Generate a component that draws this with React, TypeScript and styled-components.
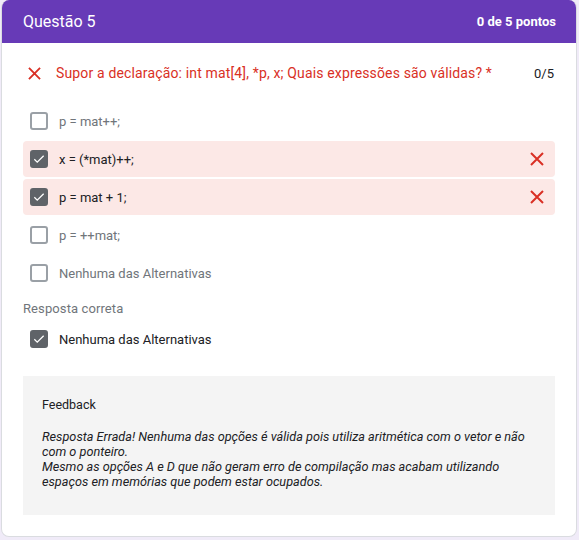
import React from "react";
import styled, { createGlobalStyle } from "styled-components";

const GlobalStyle = createGlobalStyle`
  html, body {
    margin: 0;
    padding: 0;
    background: #f0ebf8;
  }
  body {
    font-family: Roboto, "Liberation Sans", Arial, sans-serif;
  }
`;

// --- Card ---
const Card = styled.div`
  width: 576px;
  height: 537px;
  margin-left: 1px;
  box-sizing: border-box;
  background: #ffffff;
  border: 1px solid #dadce0;
  border-top: none;
  border-radius: 8px;
  overflow: hidden;
  display: flex;
  flex-direction: column;
`;

const Header = styled.div`
  height: 43px;
  background: #673ab7;
  color: #ffffff;
  display: flex;
  align-items: center;
  justify-content: space-between;
  padding: 0 20px 0 21px;
`;

const HeaderTitle = styled.span`
  font-size: 16px;
  font-weight: 400;
`;

const HeaderScore = styled.span`
  font-size: 13px;
  font-weight: 700;
`;

const Body = styled.div`
  padding: 0 21px;
  display: flex;
  flex-direction: column;
`;

const QuestionRow = styled.div`
  height: 60px;
  display: flex;
  align-items: center;
  padding: 0 1px 0 5px;
`;

const QuestionText = styled.span`
  flex: 1;
  margin-left: 15px;
  font-size: 14px;
  letter-spacing: 0.15px;
  color: #d93025;
`;

const QuestionScore = styled.span`
  font-size: 13px;
  color: #202124;
`;

const OptionList = styled.div`
  display: flex;
  flex-direction: column;
  gap: 2px;
`;

const OptionRow = styled.div<{ $wrong?: boolean }>`
  height: 36px;
  border-radius: 4px;
  background: ${(p) => (p.$wrong ? "#fce8e6" : "transparent")};
  display: flex;
  align-items: center;
  padding: 0 11px 0 7px;
`;

const OptionText = styled.span<{ $checked?: boolean }>`
  flex: 1;
  margin-left: 11px;
  font-size: 13px;
  color: ${(p) => (p.$checked ? "#202124" : "#70757a")};
`;

const Box = styled.span<{ $checked?: boolean }>`
  width: 18px;
  height: 18px;
  box-sizing: border-box;
  border-radius: 3px;
  border: 2px solid #9aa0a6;
  background: ${(p) => (p.$checked ? "#5f6368" : "#ffffff")};
  border-color: ${(p) => (p.$checked ? "#5f6368" : "#9aa0a6")};
  display: flex;
  align-items: center;
  justify-content: center;
  flex-shrink: 0;
`;

const SectionLabel = styled.div`
  margin-top: 10px;
  font-size: 13px;
  font-weight: 400;
  color: #70757a;
  letter-spacing: 0.1px;
`;

const CorrectRow = styled(OptionRow)`
  margin-top: 5px;
`;

const FeedbackBox = styled.div`
  margin-top: 19px;
  height: 139px;
  box-sizing: border-box;
  background: #f4f4f4;
  padding: 21px 20px 0 19px;
`;

const FeedbackTitle = styled.div`
  font-size: 12.5px;
  font-weight: 400;
  color: #202124;
`;

const FeedbackText = styled.p`
  margin: 17px 0 0;
  font-size: 12.7px;
  line-height: 15px;
  font-style: italic;
  color: #202124;
`;

function Check() {
  return (
    <svg width="14" height="14" viewBox="0 0 24 24">
      <path d="M4 12.5l5 5L20 6.5" fill="none" stroke="#ffffff" strokeWidth="2.2" />
    </svg>
  );
}

function Cross({ size = 14 }: { size?: number }) {
  return (
    <svg width={size} height={size} viewBox="0 0 14 14">
      <path d="M1 1L13 13M13 1L1 13" stroke="#d93025" strokeWidth="2" fill="none" />
    </svg>
  );
}

function Checkbox({ checked }: { checked?: boolean }) {
  return <Box $checked={checked}>{checked && <Check />}</Box>;
}

const options = [
  { text: "p = mat++;", checked: false },
  { text: "x = (*mat)++;", checked: true },
  { text: "p = mat + 1;", checked: true },
  { text: "p = ++mat;", checked: false },
  { text: "Nenhuma das Alternativas", checked: false },
];

export default function App() {
  return (
    <>
      <GlobalStyle />
      <Card>
        <Header>
          <HeaderTitle>Questão 5</HeaderTitle>
          <HeaderScore>0 de 5 pontos</HeaderScore>
        </Header>
        <Body>
          <QuestionRow>
            <Cross size={13} />
            <QuestionText>
              Supor a declaração: int mat[4], *p, x; Quais expressões são válidas? *
            </QuestionText>
            <QuestionScore>0/5</QuestionScore>
          </QuestionRow>
          <OptionList>
            {options.map((o) => (
              <OptionRow key={o.text} $wrong={o.checked}>
                <Checkbox checked={o.checked} />
                <OptionText $checked={o.checked}>{o.text}</OptionText>
                {o.checked && <Cross />}
              </OptionRow>
            ))}
          </OptionList>
          <SectionLabel>Resposta correta</SectionLabel>
          <CorrectRow>
            <Checkbox checked />
            <OptionText $checked>Nenhuma das Alternativas</OptionText>
          </CorrectRow>
          <FeedbackBox>
            <FeedbackTitle>Feedback</FeedbackTitle>
            <FeedbackText>
              Resposta Errada! Nenhuma das opções é válida pois utiliza aritmética com o vetor e não
              com o ponteiro.
              <br />
              Mesmo as opções A e D que não geram erro de compilação mas acabam utilizando espaços
              em memórias que podem estar ocupados.
            </FeedbackText>
          </FeedbackBox>
        </Body>
      </Card>
    </>
  );
}
